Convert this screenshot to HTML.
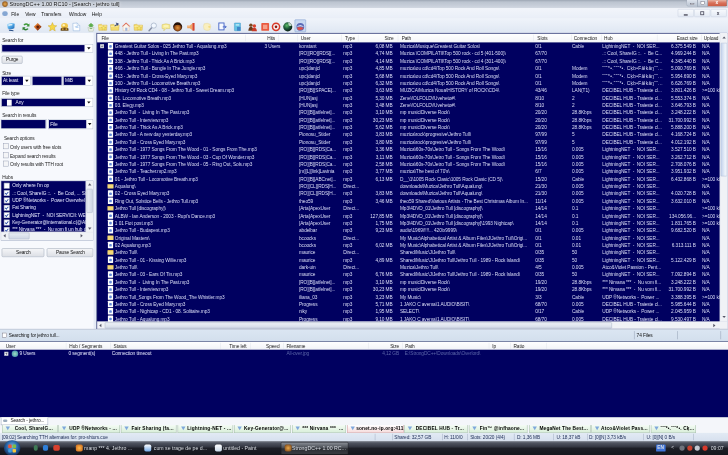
<!DOCTYPE html>
<html><head><meta charset="utf-8"><title>StrongDC++</title>
<style>
html,body{margin:0;padding:0;width:728px;height:455px;overflow:hidden;background:#fff}
#s{position:absolute;left:0;top:0;width:1680px;height:1050px;transform:scale(0.4333333);transform-origin:0 0;font-family:"Liberation Sans",sans-serif;font-size:11px;letter-spacing:-0.18px;color:#000;background:#f6f8fc;overflow:hidden;filter:blur(0.8px)}
#s div,#s span,#s i,#s b{position:absolute;box-sizing:border-box;white-space:nowrap;font-style:normal;font-weight:normal}
.nv{background:#000060}
#title{left:0;top:0;width:1680px;height:19px;background:linear-gradient(#9ea7b4 0,#bcc4d0 25%,#c8cfda 70%,#d3d9e3 100%)}
#menu{left:0;top:19px;width:1680px;height:24px;background:linear-gradient(#f2f5fb,#e9eef7)}
#menu span{top:7px;font-size:11.2px;letter-spacing:0;color:#111}
#tool{left:0;top:43px;width:1680px;height:33px;background:linear-gradient(#eff3fa,#dfe7f3)}
#left{left:0;top:76px;width:216px;height:683px;background:#f7f9fd;color:#1a1a1a}
#split{left:216px;top:76px;width:6px;height:683px;background:#e6ecf6}
#list{left:222px;top:76px;width:1456px;height:683px;background:#000060;overflow:hidden;border-left:2px solid #8f9bb5;}
#lhead{left:0;top:0;width:1456px;height:22px;background:linear-gradient(#ffffff,#f4f5f8);border-top:2px solid #7a84a6;border-bottom:1px solid #d5dbe6;color:#222}
#lhead span{top:4px}
#lhead i{top:2px;width:1px;height:15px;background:#dfe3ea}
.r{left:0;width:1436px;height:17px;color:#dcdff8}
#s .r span{top:3px;white-space:pre}
.rt{text-align:right}
.pm{left:7px;top:4px;width:9px;height:9px;background:#fff;border:1px solid #8a93a8}
.pm:before{content:"";position:absolute;left:1px;top:3px;width:5px;height:1px;background:#224}
.pm:after{content:"";position:absolute;left:3px;top:1px;width:1px;height:5px;background:#224}
.fi{left:25px;top:1px;width:12px;height:15px;background:#fff;border-radius:1px}
.fi:after{content:"";position:absolute;left:3px;top:5px;width:6px;height:6px;background:#5f86d6;border-radius:2px}
.di{left:24px;top:3px;width:14px;height:11px;background:#f3d978;border-radius:1px;border-top:2px solid #e0b84a}
.cb{background:#fff;border:1px solid #8e98ae;width:17px}
.cb:after{content:"";position:absolute;left:4px;top:50%;margin-top:-2px;border:4px solid transparent;border-top:4px solid #111;border-bottom:0}
.lb{color:#1a1a1a}
.btn{background:linear-gradient(#f5f6f8,#dcdfe5);border:1px solid #8b95a8;border-radius:3px;text-align:center;color:#111}
.chk{width:13px;height:13px;background:#f4f5f7;border:1px solid #8e98ae}
.hr{left:0;width:193px;height:17px;color:#e6e9ff}
.hr b{left:6px;top:2px;width:13px;height:13px;background:#fff;border:1px solid #7b89a8}
.hr b.c:after{content:"";position:absolute;left:3px;top:1px;width:3px;height:6px;border:solid #2a4ea8;border-width:0 2px 2px 0;transform:rotate(40deg)}
#s .hr span{left:25px;top:2px;white-space:pre}
.sb{background:#f0f2f6}
</style></head><body><div id="s">
<div id="title">
<div style="left:5px;top:3px;width:13px;height:13px;border-radius:7px;background:radial-gradient(#e9a84a,#6b3a12)"></div>
<span style="left:22px;top:3px;font-size:12.6px;letter-spacing:0;color:#111;text-shadow:0 0 6px #fff,0 0 10px #fff">StrongDC++ 1.00 RC10 - [Search - jethro tull]</span>
<div style="left:1584px;top:0;width:26px;height:15px;background:linear-gradient(#dfe5ee,#b9c3d1);border:1px solid #8793a6;border-top:0;border-radius:0 0 0 4px"><div style="left:8px;top:8px;width:9px;height:3px;background:#fff;border:1px solid #556"></div></div>
<div style="left:1609px;top:0;width:25px;height:15px;background:linear-gradient(#dfe5ee,#b9c3d1);border:1px solid #8793a6;border-top:0"><div style="left:7px;top:3px;width:9px;height:8px;background:#fff;border:1px solid #556"></div></div>
<div style="left:1633px;top:0;width:45px;height:15px;background:linear-gradient(#e8b4a4,#d8705a 50%,#cc5e46);border:1px solid #8a4a40;border-top:0;border-radius:0 0 4px 0"><span style="left:17px;top:0px;color:#fff;font-weight:bold;font-size:11px">x</span></div>
</div>
<div id="menu">
<div style="left:5px;top:7px;width:13px;height:11px;border-radius:6px;background:#6a93c9;opacity:.8"></div>
<span style="left:26px">File</span>
<span style="left:58px">View</span>
<span style="left:95px">Transfers</span>
<span style="left:159px">Window</span>
<span style="left:212px">Help</span>
<div style="left:1564px;top:2px;width:37px;height:18px;background:linear-gradient(#f8fafd,#e4eaf4);border:1px solid #c5cfdf;border-radius:2px"></div>
<div style="left:1602px;top:2px;width:37px;height:18px;background:linear-gradient(#f8fafd,#e4eaf4);border:1px solid #c5cfdf;border-radius:2px"></div>
<div style="left:1640px;top:2px;width:37px;height:18px;background:linear-gradient(#f8fafd,#e4eaf4);border:1px solid #c5cfdf;border-radius:2px"></div>
<div style="left:1578px;top:14px;width:9px;height:3px;background:#445"></div>
<div style="left:1616px;top:7px;width:9px;height:9px;border:2px solid #556"></div>
<span style="left:1654px;top:5px;font-weight:bold;color:#445">x</span>
</div>
<div id="tool">
<div style="left:680px;top:2px;width:26px;height:29px;background:#c9d9f1;border:1px solid #6d8fc6;border-radius:2px"></div>
<svg style="position:absolute;left:13px;top:7px" width="24" height="24" viewBox="0 0 24 24"><defs><linearGradient id="g1" x1="0" y1="0" x2="1" y2="1"><stop offset="0" stop-color="#d8f2ff"/><stop offset=".5" stop-color="#4fa8e6"/><stop offset="1" stop-color="#1d5fae"/></linearGradient></defs><path d="M3 6 Q12 1 21 5 L20 15 Q12 19 5 16 Z" fill="url(#g1)"/><path d="M6 7 Q11 5 16 6 L15 9 Q10 8 7 10Z" fill="#fff" opacity=".8"/><path d="M7 18 L18 20 L18 22 L8 21Z" fill="#2b4f86"/></svg>
<svg style="position:absolute;left:48px;top:7px" width="24" height="24" viewBox="0 0 24 24"><path d="M6 7 Q12 1 18 6 L20 4 L20 11 L13 11 L15.5 8.5 Q12 6 9 9Z" fill="#3f9a3a"/><path d="M18 17 Q12 23 6 18 L4 20 L4 13 L11 13 L8.5 15.5 Q12 18 15 15Z" fill="#2f7f32"/></svg>
<svg style="position:absolute;left:75px;top:7px" width="24" height="24" viewBox="0 0 24 24"><defs><linearGradient id="g3" x1="0" y1="0" x2="1" y2="1"><stop offset="0" stop-color="#f6a64a"/><stop offset=".5" stop-color="#c4561c"/><stop offset="1" stop-color="#4a1606"/></linearGradient></defs><path d="M12 3 L21 12 L12 21 L3 12Z" fill="url(#g3)"/><circle cx="12" cy="12" r="3" fill="#5a1e08"/></svg>
<svg style="position:absolute;left:109px;top:7px" width="24" height="24" viewBox="0 0 24 24"><path d="M12 2 L15 9 L22 9.5 L16.5 14 L18.5 21.5 L12 17.5 L5.500 21.5 L7.500 14 L2 9.500 L9 9Z" fill="#f6d845" stroke="#c9a227" stroke-width="1"/></svg>
<svg style="position:absolute;left:137px;top:7px" width="24" height="24" viewBox="0 0 24 24"><ellipse cx="12" cy="10" rx="8" ry="7" fill="#f1c74c"/><ellipse cx="10" cy="8" rx="3" ry="2.500" fill="#fff3b8"/><path d="M3 16 Q12 11 21 16 L21 21 L3 21Z" fill="#6a4a1a"/><circle cx="8" cy="17" r="2" fill="#d8a83a"/><circle cx="16" cy="17" r="2" fill="#d8a83a"/></svg>
<svg style="position:absolute;left:164px;top:7px" width="24" height="24" viewBox="0 0 24 24"><path d="M4 4 L14 3 L20 9 L20 21 L5 21Z" fill="#fdfeff" stroke="#8fb1dd" stroke-width="1.200"/><path d="M8 12 Q13 7 18 13 Q14 17 8 12Z" fill="#b7d2f2"/><path d="M14 3 L14 9 L20 9" fill="none" stroke="#8fb1dd"/></svg>
<svg style="position:absolute;left:198px;top:7px" width="24" height="24" viewBox="0 0 24 24"><path d="M5 9 L12 3 L19 9 L16 9 L16 13 L8 13 L8 9Z" fill="#5fae4e"/><path d="M5 13 L19 13 L17 22 L7 22Z" fill="#eef1ea" stroke="#a9b7a2" stroke-width="1"/><path d="M9 16 L15 16" stroke="#6aa85a" stroke-width="2"/></svg>
<svg style="position:absolute;left:225px;top:7px" width="24" height="24" viewBox="0 0 24 24"><path d="M2 7 L9 6 L11 8 L22 8 L21 20 L3 20Z" fill="#f4dc6c" stroke="#d2ac3a" stroke-width="1"/><path d="M3 11 L21 10" stroke="#fff4b8" stroke-width="1.500"/><path d="M14 9 L15.500 13 L19.500 13 L16.500 15.500 L17.500 19.500 L14 17 L10.500 19.500 L11.500 15.500 L8.500 13 L12.500 13Z" fill="#f7ef7a" stroke="#c9a227" stroke-width=".7"/></svg>
<svg style="position:absolute;left:253px;top:7px" width="24" height="24" viewBox="0 0 24 24"><path d="M2 7 L9 6 L11 8 L22 8 L21 20 L3 20Z" fill="#f4dc6c" stroke="#d2ac3a" stroke-width="1"/><path d="M3 11 L21 10" stroke="#fff4b8" stroke-width="1.500"/><path d="M14 2 L21 4 L19 10 L17.500 7.500 L12 11 L11 9.500 L16 6Z" fill="#3a4a7a"/></svg>
<svg style="position:absolute;left:279px;top:7px" width="24" height="24" viewBox="0 0 24 24"><path d="M2 11 L12 2 L22 11 L18 11 L12 5.500 L6 11Z" fill="#e2604a"/><path d="M5 11 L12 5 L19 11 L19 21 L5 21Z" fill="#fbf4ec" stroke="#d9b9a2" stroke-width="1"/><rect x="10" y="14" width="5" height="7" fill="#9fb7dd"/></svg>
<svg style="position:absolute;left:307px;top:7px" width="24" height="24" viewBox="0 0 24 24"><path d="M2 7 L9 6 L11 8 L22 8 L21 20 L3 20Z" fill="#f4dc6c" stroke="#d2ac3a" stroke-width="1"/><path d="M3 11 L21 10" stroke="#fff4b8" stroke-width="1.500"/><path d="M14 9 L15.500 13 L19.500 13 L16.500 15.500 L17.500 19.500 L14 17 L10.500 19.500 L11.500 15.500 L8.500 13 L12.500 13Z" fill="#f7ef7a" stroke="#c9a227" stroke-width=".7"/></svg>
<svg style="position:absolute;left:340px;top:7px" width="24" height="24" viewBox="0 0 24 24"><path d="M4 21 L11 13" stroke="#8a93a8" stroke-width="3.500" stroke-linecap="round"/><circle cx="15" cy="9" r="6" fill="#f2f8ff" stroke="#a7b4c9" stroke-width="1.800"/></svg>
<svg style="position:absolute;left:371px;top:7px" width="24" height="24" viewBox="0 0 24 24"><path d="M3 7 Q12 3 21 7 L21 16 L12 16 L7 21 L8 16 L3 16Z" fill="#f8ed9a" stroke="#cdb94e" stroke-width="1"/><path d="M7 10 L17 10" stroke="#fffbe0" stroke-width="2"/></svg>
<svg style="position:absolute;left:398px;top:7px" width="24" height="24" viewBox="0 0 24 24"><defs><radialGradient id="g14" cx=".5" cy=".6" r=".5"><stop offset="0" stop-color="#e0963c"/><stop offset=".55" stop-color="#a85a1c"/><stop offset="1" stop-color="#24100a"/></radialGradient></defs><circle cx="12" cy="12" r="10.500" fill="url(#g14)"/><path d="M3 9 Q12 -2 21 9 Q12 5 3 9Z" fill="#1a0c06"/></svg>
<svg style="position:absolute;left:429px;top:7px" width="24" height="24" viewBox="0 0 24 24"><path d="M3 9 L9 9 L15 4 L15 20 L9 15 L3 15Z" fill="#f0a868"/><rect x="15" y="3" width="5" height="18" rx="1" fill="#d8482e"/><path d="M4 10 L9 10" stroke="#ffe0c0" stroke-width="1.500"/></svg>
<svg style="position:absolute;left:466px;top:7px" width="24" height="24" viewBox="0 0 24 24"><path d="M5 5 Q12 2 19 6 Q22 12 18 19 Q11 22 5 18 Q2 11 5 5Z" fill="#f9efbf" stroke="#e6d592" stroke-width="1"/><circle cx="17" cy="12" r="2.500" fill="#f3dc84"/></svg>
<svg style="position:absolute;left:501px;top:7px" width="24" height="24" viewBox="0 0 24 24"><rect x="4" y="3" width="12" height="16" fill="#f6f9ff" stroke="#3d5ec4" stroke-width="2"/><path d="M13 12 L21 12 M18 9 L21 12 L18 15" stroke="#3d5ec4" stroke-width="2" fill="none"/></svg>
<svg style="position:absolute;left:536px;top:7px" width="24" height="24" viewBox="0 0 24 24"><rect x="5" y="3" width="14" height="18" rx="1" fill="#63c3e4" stroke="#3a8fc4" stroke-width="1"/><rect x="8" y="6" width="8" height="3" fill="#c8eefa"/><rect x="11" y="12" width="8" height="9" fill="#3f86c8"/></svg>
<svg style="position:absolute;left:571px;top:7px" width="24" height="24" viewBox="0 0 24 24"><circle cx="8" cy="8" r="4" fill="#7a4a22"/><path d="M2 21 Q3 12 8 12 Q13 12 14 21Z" fill="#6a3a1a"/><circle cx="16" cy="10" r="4" fill="#d9442e"/><path d="M10 22 Q11 14 16 14 Q21 14 22 22Z" fill="#c83a28"/></svg>
<svg style="position:absolute;left:600px;top:7px" width="24" height="24" viewBox="0 0 24 24"><rect x="3" y="3" width="18" height="18" rx="2" fill="#e9583f"/><rect x="7" y="7" width="10" height="10" fill="#f4a08a"/></svg>
<svg style="position:absolute;left:625px;top:7px" width="24" height="24" viewBox="0 0 24 24"><circle cx="12" cy="12" r="10" fill="#d83a2a"/><circle cx="12" cy="12" r="6.500" fill="#f6eeee"/><circle cx="12" cy="12" r="3" fill="#8a1a12"/></svg>
<svg style="position:absolute;left:652px;top:7px" width="24" height="24" viewBox="0 0 24 24"><defs><radialGradient id="g22" cx=".4" cy=".35" r=".7"><stop offset="0" stop-color="#5fc06a"/><stop offset=".5" stop-color="#1f5a3a"/><stop offset="1" stop-color="#081410"/></radialGradient></defs><circle cx="12" cy="12" r="10.500" fill="url(#g22)"/><path d="M13 2 Q20 3 21 10 Q17 11 14 8Z" fill="#e8f6e8" opacity=".8"/></svg>
<svg style="position:absolute;left:681px;top:7px" width="24" height="24" viewBox="0 0 24 24"><circle cx="12" cy="12" r="9" fill="#5a6ab8"/><path d="M3 12 Q12 5 21 12 Q12 9 3 12Z" fill="#fff"/><path d="M4 14 Q12 10 20 15 Q13 22 7 19Z" fill="#d8504a"/></svg>
</div>
<div id="left">
<span class="lb" style="left:5px;top:10px">Search for</span>
<div style="left:3px;top:26px;width:212px;height:19px;background:#fff;border:1px solid #a9b5c9"></div>
<div class="nv" style="left:5px;top:28px;width:190px;height:15px;color:#f0f2ff"><span style="left:3px;top:1px"></span></div>
<div style="left:201px;top:33px;border:4px solid transparent;border-top:5px solid #111;border-bottom:0"></div>
<div class="btn" style="left:4px;top:53px;width:48px;height:18px"><span style="left:9px;top:1px">Purge</span></div>
<span class="lb" style="left:5px;top:86px">Size</span>
<div style="left:2px;top:99px;width:69px;height:23px;background:#fff;border:1px solid #a9b5c9"></div>
<div class="nv" style="left:4px;top:101px;width:49px;height:19px;color:#f0f2ff"><span style="left:3px;top:3px">At least</span></div>
<div style="left:58px;top:108px;border:4px solid transparent;border-top:5px solid #111;border-bottom:0"></div>
<div style="left:73px;top:99px;width:71px;height:23px;background:#fff;border:1px solid #a9b5c9"></div><div class="nv" style="left:75px;top:101px;width:67px;height:19px"></div>
<div style="left:145px;top:99px;width:70px;height:23px;background:#fff;border:1px solid #a9b5c9"></div>
<div class="nv" style="left:147px;top:101px;width:50px;height:19px;color:#f0f2ff"><span style="left:3px;top:3px">MiB</span></div>
<div style="left:202px;top:108px;border:4px solid transparent;border-top:5px solid #111;border-bottom:0"></div>
<span class="lb" style="left:5px;top:134px">File type</span>
<div style="left:2px;top:150px;width:213px;height:21px;background:#fff;border:1px solid #a9b5c9"></div>
<div class="nv" style="left:4px;top:152px;width:192px;height:17px;color:#f0f2ff"><span style="left:0px;top:2px"><i style="left:12px;top:0px;width:11px;height:14px;background:#fff"></i><span style="left:32px;top:0">Any</span></span></div>
<div style="left:201px;top:158px;border:4px solid transparent;border-top:5px solid #111;border-bottom:0"></div>
<span class="lb" style="left:5px;top:184px">Search in results</span>
<div style="left:2px;top:199px;width:105px;height:22px;background:#fff;border:1px solid #a9b5c9"></div><div class="nv" style="left:3px;top:201px;width:102px;height:19px"></div>
<div style="left:111px;top:199px;width:104px;height:23px;background:#fff;border:1px solid #a9b5c9"></div>
<div class="nv" style="left:113px;top:201px;width:86px;height:19px;color:#f0f2ff"><span style="left:3px;top:3px">File</span></div>
<div style="left:203px;top:208px;border:4px solid transparent;border-top:5px solid #111;border-bottom:0"></div>
<span class="lb" style="left:9px;top:236px">Search options</span>
<div class="chk" style="left:7px;top:255px"></div>
<span class="lb" style="left:23px;top:257px">Only users with free slots</span>
<div class="chk" style="left:7px;top:276px"></div>
<span class="lb" style="left:23px;top:278px">Expand search results</span>
<div class="chk" style="left:7px;top:295px"></div>
<span class="lb" style="left:23px;top:297px">Only results with TTH root</span>
<span class="lb" style="left:5px;top:327px">Hubs</span>
<div style="left:2px;top:341px;width:214px;height:138px;background:#fff;border:1px solid #7f8db0"></div>
<div class="nv" style="left:3px;top:342px;width:195px;height:117px;overflow:hidden">
<div class="hr" style="top:2px"><b></b><span>Only where I&#x27;m op</span></div>
<div class="hr" style="top:19px"><b class="c"></b><span>.:: Cool, ShareIG ::.  -  Be Cool, ... St</span></div>
<div class="hr" style="top:36px"><b class="c"></b><span>UDP ®Networks -  Power Overwhel</span></div>
<div class="hr" style="top:53px"><b class="c"></b><span>Fat Sharing</span></div>
<div class="hr" style="top:70px"><b class="c"></b><span>LightningNET  -  NOI SERVICII: WE</span></div>
<div class="hr" style="top:87px"><b class="c"></b><span>Key-Generator@international.c{@ABC</span></div>
<div class="hr" style="top:104px"><b class="c"></b><span>*** Nirvana ***  -  Nu vom fi un hub d</span></div>
</div>
<div class="sb" style="left:198px;top:342px;width:17px;height:117px;border-left:1px solid #d8dde8"></div>
<div style="left:200px;top:360px;width:14px;height:55px;background:linear-gradient(90deg,#e9edf4,#cfd6e4);border:1px solid #9aa6bd;border-radius:2px"></div>
<div style="left:203px;top:347px;border:4px solid transparent;border-bottom:5px solid #556;border-top:0"></div>
<div style="left:203px;top:449px;border:4px solid transparent;border-top:5px solid #556;border-bottom:0"></div>
<div class="sb" style="left:3px;top:459px;width:212px;height:19px;border-top:1px solid #d8dde8"></div>
<div style="left:20px;top:461px;width:48px;height:15px;background:linear-gradient(#e9edf4,#cfd6e4);border:1px solid #9aa6bd;border-radius:2px"></div>
<div style="left:8px;top:464px;border:4px solid transparent;border-right:5px solid #556;border-left:0"></div>
<div style="left:186px;top:464px;border:4px solid transparent;border-left:5px solid #556;border-right:0"></div>
<div class="btn" style="left:4px;top:497px;width:98px;height:20px"><span style="left:32px;top:2px">Search</span></div>
<div class="btn" style="left:108px;top:497px;width:107px;height:20px"><span style="left:20px;top:2px">Pause Search</span></div>
</div><div id="split"></div>
<div id="list"><div id="lhead">
<span style="left:10px">File</span>
<span class="rt" style="left:351px;width:60px">Hits</span>
<span style="left:470px">User</span>
<span style="left:572px">Type</span>
<span class="rt" style="left:624px;width:60px">Size</span>
<span style="left:703px">Path</span>
<span style="left:1016px">Slots</span>
<span style="left:1100px">Connection</span>
<span style="left:1170px">Hub</span>
<span class="rt" style="left:1326px;width:60px">Exact size</span>
<span style="left:1400px">Upload</span>
<i style="left:342px"></i>
<i style="left:418px"></i>
<i style="left:462px"></i>
<i style="left:564px"></i>
<i style="left:602px"></i>
<i style="left:694px"></i>
<i style="left:1006px"></i>
<i style="left:1094px"></i>
<i style="left:1164px"></i>
<i style="left:1292px"></i>
<i style="left:1394px"></i>
</div>
<div class="r" style="top:22px">
<div class="pm"></div>
<div class="fi"></div>
<span style="left:41px">Greatest Guitar Solos - 025 Jethro Tull - Aqualung.mp3</span>
<span class="rt" style="left:345px;width:78px">3 Users</span>
<span style="left:466px">konstant</span>
<span style="left:568px">mp3</span>
<span class="rt" style="left:598px;width:84px">6,08 MB</span>
<span style="left:699px">Muzica\Musique\Greatest Guitar Solos\</span>
<span style="left:1011px">0/1</span>
<span style="left:1096px">Cable</span>
<span style="left:1166px">LightningNET  -  NOI SER...</span>
<span class="rt" style="left:1286px;width:96px">6.375.549 B</span>
<span style="left:1396px">N/A</span>
</div>
<div class="r" style="top:39px">
<div class="fi"></div>
<span style="left:41px">448 - Jethro Tull - Living In The Past.mp3</span>
<span style="left:466px">[RO][RO][RDS][...</span>
<span style="left:568px">mp3</span>
<span class="rt" style="left:598px;width:84px">4,74 MB</span>
<span style="left:699px">Muzica \COMPILATII\Top 500 rock - cd 5 (401-500)\</span>
<span style="left:1011px">67/70</span>
<span style="left:1166px">.:: Cool, ShareIG ::.  -  Be C...</span>
<span class="rt" style="left:1286px;width:96px">4.969.244 B</span>
<span style="left:1396px">N/A</span>
</div>
<div class="r" style="top:56px">
<div class="fi"></div>
<span style="left:41px">338 - Jethro Tull - Thick As A Brick.mp3</span>
<span style="left:466px">[RO][RO][RDS][...</span>
<span style="left:568px">mp3</span>
<span class="rt" style="left:598px;width:84px">4,14 MB</span>
<span style="left:699px">Muzica \COMPILATII\Top 500 rock - cd 4 (301-400)\</span>
<span style="left:1011px">67/70</span>
<span style="left:1166px">.:: Cool, ShareIG ::.  -  Be C...</span>
<span class="rt" style="left:1286px;width:96px">4.345.440 B</span>
<span style="left:1396px">N/A</span>
</div>
<div class="r" style="top:73px">
<div class="fi"></div>
<span style="left:41px">466 - Jethro Tull - Bungle In The Jungle.mp3</span>
<span style="left:466px">upc}danjcl</span>
<span style="left:568px">mp3</span>
<span class="rt" style="left:598px;width:84px">4,85 MB</span>
<span style="left:699px">muzica\ou cd\cd4\Top 500 Rock And Roll Songs\</span>
<span style="left:1011px">0/1</span>
<span style="left:1096px">Modem</span>
<span style="left:1166px;letter-spacing:0.7px">˜˜˜*•.˜˜˜*•. Cķb•Fâłkâŋ˜˜...</span>
<span class="rt" style="left:1286px;width:96px">5.090.769 B</span>
<span style="left:1396px">N/A</span>
</div>
<div class="r" style="top:90px">
<div class="fi"></div>
<span style="left:41px">413 - Jethro Tull - Cross-Eyed Mary.mp3</span>
<span style="left:466px">upc}danjcl</span>
<span style="left:568px">mp3</span>
<span class="rt" style="left:598px;width:84px">5,68 MB</span>
<span style="left:699px">muzica\ou cd\cd4\Top 500 Rock And Roll Songs\</span>
<span style="left:1011px">0/1</span>
<span style="left:1096px">Modem</span>
<span style="left:1166px;letter-spacing:0.7px">˜˜˜*•.˜˜˜*•. Cķb•Fâłkâŋ˜˜...</span>
<span class="rt" style="left:1286px;width:96px">5.954.690 B</span>
<span style="left:1396px">N/A</span>
</div>
<div class="r" style="top:107px">
<div class="fi"></div>
<span style="left:41px">100 - Jethro Tull - Locomotive Breath.mp3</span>
<span style="left:466px">upc}danjcl</span>
<span style="left:568px">mp3</span>
<span class="rt" style="left:598px;width:84px">6,32 MB</span>
<span style="left:699px">muzica\ou cd\cd4\Top 500 Rock And Roll Songs\</span>
<span style="left:1011px">0/1</span>
<span style="left:1096px">Modem</span>
<span style="left:1166px;letter-spacing:0.7px">˜˜˜*•.˜˜˜*•. Cķb•Fâłkâŋ˜˜...</span>
<span class="rt" style="left:1286px;width:96px">6.626.769 B</span>
<span style="left:1396px">N/A</span>
</div>
<div class="r" style="top:124px">
<div class="fi"></div>
<span style="left:41px">History Of Rock CD4 - 08 - Jethro Tull - Sweet Dream.mp3</span>
<span style="left:466px">[RO][B][SPACE]...</span>
<span style="left:568px">mp3</span>
<span class="rt" style="left:598px;width:84px">3,63 MB</span>
<span style="left:699px">MUZICA\Muzica Noua\HISTORY of ROCK\CD4\</span>
<span style="left:1011px">43/46</span>
<span style="left:1096px">LAN(T1)</span>
<span style="left:1166px">DECIBEL HUB - Traieste cl...</span>
<span class="rt" style="left:1286px;width:96px">3.801.426 B</span>
<span style="left:1396px">&gt;=100 kI</span>
</div>
<div class="r" style="top:141px">
<div class="fi"></div>
<span style="left:41px">01. Locomotive Breath.mp3</span>
<span style="left:466px">[HUN]asj</span>
<span style="left:568px">mp3</span>
<span class="rt" style="left:598px;width:84px">5,30 MB</span>
<span style="left:699px">Zene\!OLFOLD\!Uveheto#\</span>
<span style="left:1011px">8/10</span>
<span style="left:1096px">2</span>
<span style="left:1166px">DECIBEL HUB - Traieste cl...</span>
<span class="rt" style="left:1286px;width:96px">5.553.374 B</span>
<span style="left:1396px">N/A</span>
</div>
<div class="r" style="top:158px">
<div class="fi"></div>
<span style="left:41px">03. Elegy.mp3</span>
<span style="left:466px">[HUN]asj</span>
<span style="left:568px">mp3</span>
<span class="rt" style="left:598px;width:84px">3,48 MB</span>
<span style="left:699px">Zene\!OLFOLD\!Uveheto#\</span>
<span style="left:1011px">8/10</span>
<span style="left:1096px">2</span>
<span style="left:1166px">DECIBEL HUB - Traieste cl...</span>
<span class="rt" style="left:1286px;width:96px">3.646.793 B</span>
<span style="left:1396px">N/A</span>
</div>
<div class="r" style="top:175px">
<div class="fi"></div>
<span style="left:41px">Jethro Tull  -  Living In The Past.mp3</span>
<span style="left:466px">[RO][B][atfelnet]...</span>
<span style="left:568px">mp3</span>
<span class="rt" style="left:598px;width:84px">3,10 MB</span>
<span style="left:699px">mp music\Diverse Rock\</span>
<span style="left:1011px">20/20</span>
<span style="left:1096px">28.8Kbps</span>
<span style="left:1166px">DECIBEL HUB - Traieste cl...</span>
<span class="rt" style="left:1286px;width:96px">3.248.222 B</span>
<span style="left:1396px">N/A</span>
</div>
<div class="r" style="top:192px">
<div class="fi"></div>
<span style="left:41px">Jethro Tull - Interview.mp3</span>
<span style="left:466px">[RO][B][atfelnet]...</span>
<span style="left:568px">mp3</span>
<span class="rt" style="left:598px;width:84px">30,23 MB</span>
<span style="left:699px">mp music\Diverse Rock\</span>
<span style="left:1011px">20/20</span>
<span style="left:1096px">28.8Kbps</span>
<span style="left:1166px">DECIBEL HUB - Traieste cl...</span>
<span class="rt" style="left:1286px;width:96px">31.700.992 B</span>
<span style="left:1396px">N/A</span>
</div>
<div class="r" style="top:209px">
<div class="fi"></div>
<span style="left:41px">Jethro Tull - Thick As A Brick.mp3</span>
<span style="left:466px">[RO][B][atfelnet]...</span>
<span style="left:568px">mp3</span>
<span class="rt" style="left:598px;width:84px">5,62 MB</span>
<span style="left:699px">mp music\Diverse Rock\</span>
<span style="left:1011px">20/20</span>
<span style="left:1096px">28.8Kbps</span>
<span style="left:1166px">DECIBEL HUB - Traieste cl...</span>
<span class="rt" style="left:1286px;width:96px">5.888.200 B</span>
<span style="left:1396px">N/A</span>
</div>
<div class="r" style="top:226px">
<div class="fi"></div>
<span style="left:41px">Jethro Tull - A new day yesterday.mp3</span>
<span style="left:466px">Pionosu_Stider</span>
<span style="left:568px">mp3</span>
<span class="rt" style="left:598px;width:84px">3,83 MB</span>
<span style="left:699px">muzica\rock\progresive\Jethro Tull\</span>
<span style="left:1011px">97/99</span>
<span style="left:1096px">5</span>
<span style="left:1166px">DECIBEL HUB - Traieste cl...</span>
<span class="rt" style="left:1286px;width:96px">4.168.724 B</span>
<span style="left:1396px">N/A</span>
</div>
<div class="r" style="top:243px">
<div class="fi"></div>
<span style="left:41px">Jethro Tull - Cross Eyed Mary.mp3</span>
<span style="left:466px">Pionosu_Stider</span>
<span style="left:568px">mp3</span>
<span class="rt" style="left:598px;width:84px">3,80 MB</span>
<span style="left:699px">muzica\rock\progresive\Jethro Tull\</span>
<span style="left:1011px">97/99</span>
<span style="left:1096px">5</span>
<span style="left:1166px">DECIBEL HUB - Traieste cl...</span>
<span class="rt" style="left:1286px;width:96px">4.012.192 B</span>
<span style="left:1396px">N/A</span>
</div>
<div class="r" style="top:260px">
<div class="fi"></div>
<span style="left:41px">Jethro Tull - 1977 Songs From The Wood - 01 - Songs From The.mp3</span>
<span style="left:466px">[RO][B][RDS]Ca...</span>
<span style="left:568px">mp3</span>
<span class="rt" style="left:598px;width:84px">3,36 MB</span>
<span style="left:699px">Muzica\60s-70s\Jetro Tull - Songs From The Wood\</span>
<span style="left:1011px">15/16</span>
<span style="left:1096px">0.005</span>
<span style="left:1166px">LightningNET  -  NOI SER...</span>
<span class="rt" style="left:1286px;width:96px">3.527.510 B</span>
<span style="left:1396px">N/A</span>
</div>
<div class="r" style="top:277px">
<div class="fi"></div>
<span style="left:41px">Jethro Tull - 1977 Songs From The Wood - 03 - Cup Of Wonder.mp3</span>
<span style="left:466px">[RO][B][RDS]Ca...</span>
<span style="left:568px">mp3</span>
<span class="rt" style="left:598px;width:84px">3,11 MB</span>
<span style="left:699px">Muzica\60s-70s\Jetro Tull - Songs From The Wood\</span>
<span style="left:1011px">15/16</span>
<span style="left:1096px">0.005</span>
<span style="left:1166px">LightningNET  -  NOI SER...</span>
<span class="rt" style="left:1286px;width:96px">3.262.712 B</span>
<span style="left:1396px">N/A</span>
</div>
<div class="r" style="top:294px">
<div class="fi"></div>
<span style="left:41px">Jethro Tull - 1977 Songs From The Wood - 05 - Ring Out, Sols.mp3</span>
<span style="left:466px">[RO][B][RDS]Ca...</span>
<span style="left:568px">mp3</span>
<span class="rt" style="left:598px;width:84px">2,58 MB</span>
<span style="left:699px">Muzica\60s-70s\Jetro Tull - Songs From The Wood\</span>
<span style="left:1011px">15/16</span>
<span style="left:1096px">0.005</span>
<span style="left:1166px">LightningNET  -  NOI SER...</span>
<span class="rt" style="left:1286px;width:96px">2.708.076 B</span>
<span style="left:1396px">N/A</span>
</div>
<div class="r" style="top:311px">
<div class="fi"></div>
<span style="left:41px">Jethro Tull - Teacher.mp2.mp3</span>
<span style="left:466px">[m][L][link]Lavinia</span>
<span style="left:568px">mp3</span>
<span class="rt" style="left:598px;width:84px">3,77 MB</span>
<span style="left:699px">muzica\The best of 70&#x27;s\</span>
<span style="left:1011px">6/7</span>
<span style="left:1096px">0.005</span>
<span style="left:1166px">LightningNET  -  NOI SER...</span>
<span class="rt" style="left:1286px;width:96px">3.951.932 B</span>
<span style="left:1396px">N/A</span>
</div>
<div class="r" style="top:328px">
<div class="fi"></div>
<span style="left:41px">01 - Jethro Tull - Locomotive Breath.mp3</span>
<span style="left:466px">[RO][B][ABCnet]...</span>
<span style="left:568px">mp3</span>
<span class="rt" style="left:598px;width:84px">6,13 MB</span>
<span style="left:699px">D__\1\1005 Rock Clasic\1005 Rock Clasic (CD 5)\</span>
<span style="left:1011px">15/20</span>
<span style="left:1096px">Cable</span>
<span style="left:1166px">LightningNET  -  NOI SER...</span>
<span class="rt" style="left:1286px;width:96px">6.432.868 B</span>
<span style="left:1396px">&gt;=100 kI</span>
</div>
<div class="r" style="top:345px">
<div class="di"></div>
<span style="left:41px">Aqualung\</span>
<span style="left:466px">[RO][CL][RDS]H...</span>
<span style="left:568px">Direct...</span>
<span style="left:699px">downloads\Muzica\Jethro Tull\Aqualung\</span>
<span style="left:1011px">21/30</span>
<span style="left:1096px">0.005</span>
<span style="left:1166px">LightningNET  -  NOI SER...</span>
<span style="left:1396px">N/A</span>
</div>
<div class="r" style="top:362px">
<div class="fi"></div>
<span style="left:41px">02 - Cross Eyed Mary.mp3</span>
<span style="left:466px">[RO][CL][RDS]H...</span>
<span style="left:568px">mp3</span>
<span class="rt" style="left:598px;width:84px">3,83 MB</span>
<span style="left:699px">downloads\Muzica\Jethro Tull\Aqualung\</span>
<span style="left:1011px">21/30</span>
<span style="left:1096px">0.005</span>
<span style="left:1166px">LightningNET  -  NOI SER...</span>
<span class="rt" style="left:1286px;width:96px">4.020.728 B</span>
<span style="left:1396px">N/A</span>
</div>
<div class="r" style="top:379px">
<div class="fi"></div>
<span style="left:41px">Ring Out, Solstice Bells - Jethro Tull.mp3</span>
<span style="left:466px">theo59</span>
<span style="left:568px">mp3</span>
<span class="rt" style="left:598px;width:84px">3,46 MB</span>
<span style="left:699px">theo59 Shared\Various Artists - The Best Christmas Album In...</span>
<span style="left:1011px">11/14</span>
<span style="left:1096px">0.005</span>
<span style="left:1166px">LightningNET  -  NOI SER...</span>
<span class="rt" style="left:1286px;width:96px">3.632.010 B</span>
<span style="left:1396px">N/A</span>
</div>
<div class="r" style="top:396px">
<div class="di"></div>
<span style="left:41px">Jethro Tull [discography]\</span>
<span style="left:466px">[Arta]ApexUser</span>
<span style="left:568px">Direct...</span>
<span style="left:699px">Mp3\4DVD_01\Jethro Tull [discography]\</span>
<span style="left:1011px">14/14</span>
<span style="left:1096px">0.1</span>
<span style="left:1166px">LightningNET  -  NOI SER...</span>
<span style="left:1396px">&gt;=100 kI</span>
</div>
<div class="r" style="top:413px">
<div class="fi"></div>
<span style="left:41px">ALBW - Ian Anderson - 2003 - Rupi&#x27;s Dance.mp3</span>
<span style="left:466px">[Arta]ApexUser</span>
<span style="left:568px">mp3</span>
<span class="rt" style="left:598px;width:84px">127,85 MB</span>
<span style="left:699px">Mp3\4DVD_01\Jethro Tull [discography]\</span>
<span style="left:1011px">14/14</span>
<span style="left:1096px">0.1</span>
<span style="left:1166px">LightningNET  -  NOI SER...</span>
<span class="rt" style="left:1286px;width:96px">134.056.96...</span>
<span style="left:1396px">&gt;=100 kI</span>
</div>
<div class="r" style="top:430px">
<div class="fi"></div>
<span style="left:41px">1 01 Fiot post.mp3</span>
<span style="left:466px">[Arta]ApexUser</span>
<span style="left:568px">mp3</span>
<span class="rt" style="left:598px;width:84px">1,75 MB</span>
<span style="left:699px">Mp3\4DVD_01\Jethro Tull [discography]\1993 Nightcap\</span>
<span style="left:1011px">14/14</span>
<span style="left:1096px">0.1</span>
<span style="left:1166px">LightningNET  -  NOI SER...</span>
<span class="rt" style="left:1286px;width:96px">1.831.765 B</span>
<span style="left:1396px">&gt;=100 kI</span>
</div>
<div class="r" style="top:447px">
<div class="fi"></div>
<span style="left:41px">Jethro Tull - Budapest.mp3</span>
<span style="left:466px">abdelbar</span>
<span style="left:568px">mp3</span>
<span class="rt" style="left:598px;width:84px">9,23 MB</span>
<span style="left:699px">audio\1969\!!!!... 420\x9999\</span>
<span style="left:1011px">0/1</span>
<span style="left:1096px">0.005</span>
<span style="left:1166px">LightningNET  -  NOI SER...</span>
<span class="rt" style="left:1286px;width:96px">9.682.520 B</span>
<span style="left:1396px">N/A</span>
</div>
<div class="r" style="top:464px">
<div class="di"></div>
<span style="left:41px">Original Masters\</span>
<span style="left:466px">bcoocks</span>
<span style="left:568px">Direct...</span>
<span style="left:699px">My Music\Alphabetical Artist &amp; Album Files\J\Jethro Tull\Origi...</span>
<span style="left:1011px">0/1</span>
<span style="left:1096px">0.01</span>
<span style="left:1166px">LightningNET  -  NOI SER...</span>
<span style="left:1396px">N/A</span>
</div>
<div class="r" style="top:481px">
<div class="fi"></div>
<span style="left:41px">02 Aqualung.mp3</span>
<span style="left:466px">bcoocks</span>
<span style="left:568px">mp3</span>
<span class="rt" style="left:598px;width:84px">6,02 MB</span>
<span style="left:699px">My Music\Alphabetical Artist &amp; Album Files\J\Jethro Tull\Origi...</span>
<span style="left:1011px">0/1</span>
<span style="left:1096px">0.01</span>
<span style="left:1166px">LightningNET  -  NOI SER...</span>
<span class="rt" style="left:1286px;width:96px">6.313.111 B</span>
<span style="left:1396px">N/A</span>
</div>
<div class="r" style="top:498px">
<div class="di"></div>
<span style="left:41px">Jethro Tull\</span>
<span style="left:466px">maurice</span>
<span style="left:568px">Direct...</span>
<span style="left:699px">Shared\Music\J\Jethro Tull\</span>
<span style="left:1011px">0/35</span>
<span style="left:1096px">50</span>
<span style="left:1166px">LightningNET  -  NOI SER...</span>
<span style="left:1396px">N/A</span>
</div>
<div class="r" style="top:515px">
<div class="fi"></div>
<span style="left:41px">Jethro Tull - 01 - Kissing Willie.mp3</span>
<span style="left:466px">maurice</span>
<span style="left:568px">mp3</span>
<span class="rt" style="left:598px;width:84px">4,89 MB</span>
<span style="left:699px">Shared\Music\J\Jethro Tull\Jethro Tull - 1989 - Rock Island\</span>
<span style="left:1011px">0/35</span>
<span style="left:1096px">50</span>
<span style="left:1166px">LightningNET  -  NOI SER...</span>
<span class="rt" style="left:1286px;width:96px">5.122.429 B</span>
<span style="left:1396px">N/A</span>
</div>
<div class="r" style="top:532px">
<div class="di"></div>
<span style="left:41px">Jethro Tull\</span>
<span style="left:466px">dark-uin</span>
<span style="left:568px">Direct...</span>
<span style="left:699px">Muzica\Jethro Tull\</span>
<span style="left:1011px">4/5</span>
<span style="left:1096px">0.005</span>
<span style="left:1166px">Atco&amp;Violet Passion - Pent...</span>
<span style="left:1396px">N/A</span>
</div>
<div class="r" style="top:549px">
<div class="fi"></div>
<span style="left:41px">Jethro Tull - 03 - Ears Of Tin.mp3</span>
<span style="left:466px">maurice</span>
<span style="left:568px">mp3</span>
<span class="rt" style="left:598px;width:84px">6,76 MB</span>
<span style="left:699px">Shared\Music\J\Jethro Tull\Jethro Tull - 1989 - Rock Island\</span>
<span style="left:1011px">0/35</span>
<span style="left:1096px">50</span>
<span style="left:1166px">LightningNET  -  NOI SER...</span>
<span class="rt" style="left:1286px;width:96px">7.092.894 B</span>
<span style="left:1396px">N/A</span>
</div>
<div class="r" style="top:566px">
<div class="fi"></div>
<span style="left:41px">Jethro Tull  -  Living In The Past.mp3</span>
<span style="left:466px">[RO][B][atfelnet]...</span>
<span style="left:568px">mp3</span>
<span class="rt" style="left:598px;width:84px">3,10 MB</span>
<span style="left:699px">mp music\Diverse Rock\</span>
<span style="left:1011px">19/20</span>
<span style="left:1096px">28.8Kbps</span>
<span style="left:1166px">*** Nirvana ***  -  Nu vom fi...</span>
<span class="rt" style="left:1286px;width:96px">3.248.222 B</span>
<span style="left:1396px">N/A</span>
</div>
<div class="r" style="top:583px">
<div class="fi"></div>
<span style="left:41px">Jethro Tull - Interview.mp3</span>
<span style="left:466px">[RO][B][atfelnet]...</span>
<span style="left:568px">mp3</span>
<span class="rt" style="left:598px;width:84px">30,23 MB</span>
<span style="left:699px">mp music\Diverse Rock\</span>
<span style="left:1011px">19/20</span>
<span style="left:1096px">28.8Kbps</span>
<span style="left:1166px">*** Nirvana ***  -  Nu vom fi...</span>
<span class="rt" style="left:1286px;width:96px">31.700.992 B</span>
<span style="left:1396px">N/A</span>
</div>
<div class="r" style="top:600px">
<div class="fi"></div>
<span style="left:41px">Jethro Tull_Songs From The Wood_The Whistler.mp3</span>
<span style="left:466px">iliana_03</span>
<span style="left:568px">mp3</span>
<span class="rt" style="left:598px;width:84px">3,23 MB</span>
<span style="left:699px">My Music\</span>
<span style="left:1011px">3/3</span>
<span style="left:1096px">Cable</span>
<span style="left:1166px">UDP ®Networks -  Power ...</span>
<span class="rt" style="left:1286px;width:96px">3.388.395 B</span>
<span style="left:1396px">&gt;=100 kI</span>
</div>
<div class="r" style="top:617px">
<div class="fi"></div>
<span style="left:41px">Jethro Tull - Cross Eyed Mary.mp3</span>
<span style="left:466px">Progress</span>
<span style="left:568px">mp3</span>
<span class="rt" style="left:598px;width:84px">5,71 MB</span>
<span style="left:699px">1 JAKO C avema\1 AUDIO\BISIT\</span>
<span style="left:1011px">68/70</span>
<span style="left:1096px">0.005</span>
<span style="left:1166px">DECIBEL HUB - Traieste cl...</span>
<span class="rt" style="left:1286px;width:96px">5.985.644 B</span>
<span style="left:1396px">N/A</span>
</div>
<div class="r" style="top:634px">
<div class="fi"></div>
<span style="left:41px">Jethro Tull - Nightcap - CD1 - 08. Solitaire.mp3</span>
<span style="left:466px">niky</span>
<span style="left:568px">mp3</span>
<span class="rt" style="left:598px;width:84px">1,95 MB</span>
<span style="left:699px">SELECT\</span>
<span style="left:1011px">0/17</span>
<span style="left:1096px">Cable</span>
<span style="left:1166px">UDP ®Networks -  Power ...</span>
<span class="rt" style="left:1286px;width:96px">2.045.959 B</span>
<span style="left:1396px">N/A</span>
</div>
<div class="r" style="top:651px">
<div class="fi"></div>
<span style="left:41px">Jethro Tull - Aqualung.mp3</span>
<span style="left:466px">Progress</span>
<span style="left:568px">mp3</span>
<span class="rt" style="left:598px;width:84px">9,10 MB</span>
<span style="left:699px">1 JAKO C avema\1 AUDIO\BISIT\</span>
<span style="left:1011px">68/70</span>
<span style="left:1096px">0.005</span>
<span style="left:1166px">DECIBEL HUB - Traieste cl...</span>
<span class="rt" style="left:1286px;width:96px">9.530.497 B</span>
<span style="left:1396px">N/A</span>
</div>
<div class="sb" style="left:1437px;top:0;width:19px;height:683px;border-left:1px solid #d8dde8"></div>
<div style="left:1439px;top:23px;width:15px;height:308px;background:linear-gradient(90deg,#c3d2ec,#e6edf8 60%,#f6f9fd);border:1px solid #a9b8d6;border-radius:2px"></div>
<div style="left:1443px;top:8px;border:4px solid transparent;border-bottom:5px solid #556;border-top:0"></div>
<div style="left:1443px;top:653px;border:4px solid transparent;border-top:5px solid #556;border-bottom:0"></div>
<div class="sb" style="left:0;top:666px;width:1456px;height:17px;border-top:1px solid #d8dde8"></div>
<div style="left:18px;top:668px;width:1170px;height:14px;background:linear-gradient(#eef1f7,#d3dae7);border:1px solid #9aa6bd;border-radius:2px"></div>
<div style="left:5px;top:671px;border:4px solid transparent;border-right:5px solid #556;border-left:0"></div>
<div style="left:1422px;top:671px;border:4px solid transparent;border-left:5px solid #556;border-right:0"></div>
</div>
<div style="left:0;top:759px;width:1680px;height:28px;background:linear-gradient(#dbe6f2,#d3dfed);border-top:1px solid #8f9bb5">
<div style="left:5px;top:8px;width:11px;height:11px;border:1px solid #667;background:#fff"></div>
<span style="left:20px;top:7px;color:#111">Searching for jethro tull...</span>
<div style="left:1463px;top:4px;width:1px;height:19px;background:#8894aa"></div>
<div style="left:1563px;top:4px;width:1px;height:19px;background:#8894aa"></div>
<div style="left:1663px;top:4px;width:1px;height:19px;background:#8894aa"></div>
<span style="left:1469px;top:7px;color:#111">74 Files</span>
</div>
<div style="left:0;top:787px;width:1680px;height:176px;background:#000060;border-top:2px solid #7d89a5">
<div style="left:0;top:0;width:1680px;height:18px;background:linear-gradient(#ffffff,#f1f3f7);color:#222">
<span style="left:13px;top:3px">User</span>
<span style="left:160px;top:3px">Hub / Segments</span>
<span style="left:262px;top:3px">Status</span>
<span class="rt" style="left:509px;top:3px;width:60px">Time left</span>
<span class="rt" style="left:585px;top:3px;width:60px">Speed</span>
<span style="left:661px;top:3px">Filename</span>
<span class="rt" style="left:861px;top:3px;width:60px">Size</span>
<span style="left:935px;top:3px">Path</span>
<span style="left:1136px;top:3px">Ip</span>
<span style="left:1185px;top:3px">Ratio</span>
<i style="left:152px;top:2px;width:1px;height:14px;background:#dfe3ea"></i>
<i style="left:254px;top:2px;width:1px;height:14px;background:#dfe3ea"></i>
<i style="left:508px;top:2px;width:1px;height:14px;background:#dfe3ea"></i>
<i style="left:578px;top:2px;width:1px;height:14px;background:#dfe3ea"></i>
<i style="left:654px;top:2px;width:1px;height:14px;background:#dfe3ea"></i>
<i style="left:850px;top:2px;width:1px;height:14px;background:#dfe3ea"></i>
<i style="left:928px;top:2px;width:1px;height:14px;background:#dfe3ea"></i>
<i style="left:1128px;top:2px;width:1px;height:14px;background:#dfe3ea"></i>
<i style="left:1178px;top:2px;width:1px;height:14px;background:#dfe3ea"></i>
<i style="left:1260px;top:2px;width:1px;height:14px;background:#dfe3ea"></i>
</div>
<div style="left:0;top:19px;width:1680px;height:17px;color:#e6e9ff">
<div class="pm" style="left:10px"></div>
<div style="left:27px;top:1px;width:15px;height:15px;border-radius:8px;background:radial-gradient(#9fe0c0,#2a7aa8)"></div>
<span style="left:45px;top:2px">9 Users</span><span style="left:158px;top:2px">0 segment(s)</span><span style="left:258px;top:2px">Connection timeout</span>
<span style="left:661px;top:2px;color:#5a64a8">All-over.jpg</span><span style="left:851px;top:2px;width:70px;text-align:right;color:#5a64a8">4,12 GB</span><span style="left:934px;top:2px;color:#5a64a8">E:\StrongDC++\Downloads\Overlord\</span>
</div></div>
<div style="left:0;top:963px;width:1680px;height:36px;background:#f4f6fa">
<div style="left:0;top:0;width:1680px;height:1px;background:#9aa6bd"></div>
<div style="left:2px;top:0;width:109px;height:18px;background:#fff;border:1px solid #8f9bb5;border-top:0"><span style="left:21px;top:2px;color:#111">Search - jethro...</span><div style="left:4px;top:5px;width:10px;height:6px;border-radius:3px;background:#9ab"></div></div>
<div style="left:5px;top:18px;width:128px;height:18px;background:linear-gradient(#f4fbf4,#d9efd9);border:1px solid #8fb08f;border-top:0"><div style="left:7px;top:3px;width:0;height:0;border:5px solid transparent;border-top:9px solid #7fa8dc;border-bottom:0"></div><span style="left:20px;right:2px;text-align:center;top:2px;font-weight:bold;color:#000;letter-spacing:0.4px;white-space:pre">Cool, ShareIG...</span></div>
<div style="left:135px;top:18px;width:142px;height:18px;background:linear-gradient(#f4fbf4,#d9efd9);border:1px solid #8fb08f;border-top:0"><div style="left:7px;top:3px;width:0;height:0;border:5px solid transparent;border-top:9px solid #7fa8dc;border-bottom:0"></div><span style="left:20px;right:2px;text-align:center;top:2px;font-weight:bold;color:#000;letter-spacing:0.4px;white-space:pre">UDP ®Networks - ...</span></div>
<div style="left:279px;top:18px;width:128px;height:18px;background:linear-gradient(#f4fbf4,#d9efd9);border:1px solid #8fb08f;border-top:0"><div style="left:7px;top:3px;width:0;height:0;border:5px solid transparent;border-top:9px solid #7fa8dc;border-bottom:0"></div><span style="left:20px;right:2px;text-align:center;top:2px;font-weight:bold;color:#000;letter-spacing:0.4px;white-space:pre">Fair Sharing (fa...</span></div>
<div style="left:410px;top:18px;width:128px;height:18px;background:linear-gradient(#f4fbf4,#d9efd9);border:1px solid #8fb08f;border-top:0"><div style="left:7px;top:3px;width:0;height:0;border:5px solid transparent;border-top:9px solid #7fa8dc;border-bottom:0"></div><span style="left:20px;right:2px;text-align:center;top:2px;font-weight:bold;color:#000;letter-spacing:0.4px;white-space:pre">Lightning-NET - ...</span></div>
<div style="left:540px;top:18px;width:131px;height:18px;background:linear-gradient(#f4fbf4,#d9efd9);border:1px solid #8fb08f;border-top:0"><div style="left:7px;top:3px;width:0;height:0;border:5px solid transparent;border-top:9px solid #7fa8dc;border-bottom:0"></div><span style="left:20px;right:2px;text-align:center;top:2px;font-weight:bold;color:#000;letter-spacing:0.4px;white-space:pre">Key-Generator@...</span></div>
<div style="left:674px;top:18px;width:124px;height:18px;background:linear-gradient(#f4fbf4,#d9efd9);border:1px solid #8fb08f;border-top:0"><div style="left:7px;top:3px;width:0;height:0;border:5px solid transparent;border-top:9px solid #7fa8dc;border-bottom:0"></div><span style="left:20px;right:2px;text-align:center;top:2px;font-weight:bold;color:#000;letter-spacing:0.4px;white-space:pre">*** Nirvana ***  ...</span></div>
<div style="left:801px;top:18px;width:130px;height:18px;background:linear-gradient(#fff,#f6dcdc);border:1px solid #c88;border-top:0"><div style="left:7px;top:3px;width:0;height:0;border:5px solid transparent;border-top:9px solid #7fa8dc;border-bottom:0"></div><span style="left:20px;right:2px;text-align:center;top:2px;font-weight:bold;color:#000;letter-spacing:0.4px;white-space:pre">sonet.no-ip.org:411</span></div>
<div style="left:933px;top:18px;width:146px;height:18px;background:linear-gradient(#f4fbf4,#d9efd9);border:1px solid #8fb08f;border-top:0"><div style="left:7px;top:3px;width:0;height:0;border:5px solid transparent;border-top:9px solid #7fa8dc;border-bottom:0"></div><span style="left:20px;right:2px;text-align:center;top:2px;font-weight:bold;color:#000;letter-spacing:0.4px;white-space:pre">DECIBEL HUB - Tr...</span></div>
<div style="left:1082px;top:18px;width:135px;height:18px;background:linear-gradient(#f4fbf4,#d9efd9);border:1px solid #8fb08f;border-top:0"><div style="left:7px;top:3px;width:0;height:0;border:5px solid transparent;border-top:9px solid #7fa8dc;border-bottom:0"></div><span style="left:20px;right:2px;text-align:center;top:2px;font-weight:bold;color:#000;letter-spacing:0.4px;white-space:pre">Fin™ @infhaone...</span></div>
<div style="left:1221px;top:18px;width:142px;height:18px;background:linear-gradient(#f4fbf4,#d9efd9);border:1px solid #8fb08f;border-top:0"><div style="left:7px;top:3px;width:0;height:0;border:5px solid transparent;border-top:9px solid #7fa8dc;border-bottom:0"></div><span style="left:20px;right:2px;text-align:center;top:2px;font-weight:bold;color:#000;letter-spacing:0.4px;white-space:pre">MegaNet The Best...</span></div>
<div style="left:1365px;top:18px;width:134px;height:18px;background:linear-gradient(#f4fbf4,#d9efd9);border:1px solid #8fb08f;border-top:0"><div style="left:7px;top:3px;width:0;height:0;border:5px solid transparent;border-top:9px solid #7fa8dc;border-bottom:0"></div><span style="left:20px;right:2px;text-align:center;top:2px;font-weight:bold;color:#000;letter-spacing:0.4px;white-space:pre">Atco&amp;Violet Pass...</span></div>
<div style="left:1502px;top:18px;width:104px;height:18px;background:linear-gradient(#f4fbf4,#d9efd9);border:1px solid #8fb08f;border-top:0"><div style="left:7px;top:3px;width:0;height:0;border:5px solid transparent;border-top:9px solid #7fa8dc;border-bottom:0"></div><span style="left:20px;right:2px;text-align:center;top:2px;font-weight:bold;color:#000;letter-spacing:0.4px;white-space:pre">˜˜˜*•.˜˜˜*•. Cķ...</span></div>
</div>
<div style="left:0;top:999px;width:1680px;height:19px;background:linear-gradient(#e2eaf4,#d6e0ee);color:#1c2c55">
<span style="left:4px;top:3px">[09:02] Searching TTH alternates for: pro-shturs.cue</span>
<div style="left:865px;top:2px;width:1px;height:15px;background:#9aa6bd"></div>
<div style="left:906px;top:2px;width:1px;height:15px;background:#9aa6bd"></div>
<div style="left:1020px;top:2px;width:1px;height:15px;background:#9aa6bd"></div>
<div style="left:1079px;top:2px;width:1px;height:15px;background:#9aa6bd"></div>
<div style="left:1186px;top:2px;width:1px;height:15px;background:#9aa6bd"></div>
<div style="left:1277px;top:2px;width:1px;height:15px;background:#9aa6bd"></div>
<div style="left:1355px;top:2px;width:1px;height:15px;background:#9aa6bd"></div>
<div style="left:1485px;top:2px;width:1px;height:15px;background:#9aa6bd"></div>
<div style="left:1600px;top:2px;width:1px;height:15px;background:#9aa6bd"></div>
<span style="left:910px;top:3px">Shared: 32,57 GB</span>
<span style="left:1025px;top:3px">H: 11/0/0</span>
<span style="left:1085px;top:3px">Slots: 20/20 (4/4)</span>
<span style="left:1193px;top:3px">D: 1,36 MB</span>
<span style="left:1284px;top:3px">U: 18,37 kB</span>
<span style="left:1359px;top:3px">D: [0][N] 3,73 kB/s</span>
<span style="left:1492px;top:3px">U: [0][N] 0 B/s</span>
</div>
<div style="left:0;top:1018px;width:1680px;height:32px;background:linear-gradient(#767c88 0,#4d525e 15%,#343843 40%,#1c1e26 52%,#15171d 100%);color:#d9dde3;font-size:12px;letter-spacing:0">
<div style="left:9px;top:-2px;width:38px;height:36px;border-radius:19px;background:radial-gradient(circle at 50% 40%,#7fb7e0 0,#2f6fb0 40%,#12305e 75%,#0a1830 100%)"></div>
<div style="left:19px;top:8px;width:8px;height:8px;background:#e8553a;border-radius:2px"></div><div style="left:29px;top:8px;width:8px;height:8px;background:#7cc043;border-radius:2px"></div><div style="left:19px;top:18px;width:8px;height:8px;background:#3f9ae0;border-radius:2px"></div><div style="left:29px;top:18px;width:8px;height:8px;background:#f5c53a;border-radius:2px"></div>
<div style="left:78px;top:9px;width:9px;height:13px;border-radius:4px;background:#3f7a56"></div>
<div style="left:99px;top:9px;width:12px;height:13px;border-radius:4px;background:#2f7fd8"></div>
<div style="left:123px;top:9px;width:15px;height:13px;border-radius:4px;background:#d8402e"></div>
<div style="left:648px;top:2px;width:156px;height:29px;border-radius:3px;background:linear-gradient(#8a8f97,#4a4e55 45%,#2a2d32 55%,#3a3d43);border:1px solid #222"></div>
<div style="left:175px;top:8px;width:16px;height:16px;border-radius:4px;background:radial-gradient(#ffb84a,#c8641a)"></div>
<span style="left:194px;top:9px">manp *** 4. Jethro ...</span>
<div style="left:333px;top:8px;width:16px;height:16px;border-radius:4px;background:linear-gradient(#fff,#6fa8e8)"></div>
<span style="left:355px;top:9px">cum se trage de pe d...</span>
<div style="left:496px;top:8px;width:16px;height:16px;border-radius:4px;background:linear-gradient(#fff,#c8d8e8)"></div>
<span style="left:515px;top:9px">untitled - Paint</span>
<div style="left:657px;top:8px;width:16px;height:16px;border-radius:4px;background:radial-gradient(#e9a84a,#6b3a12)"></div>
<span style="left:674px;top:9px">StrongDC++ 1.00 RC...</span>
<div style="left:1514px;top:8px;width:22px;height:16px;background:#3f74d8;border-radius:2px"><span style="left:3px;top:1px;font-size:11px;font-weight:bold">EN</span></div>
<span style="left:1549px;top:8px;font-size:11px">&lt;</span>
<div style="left:1568px;top:10px;width:12px;height:12px;border-radius:6px;background:#6f737c"></div>
<div style="left:1586px;top:10px;width:12px;height:12px;border-radius:6px;background:#c8402e"></div>
<div style="left:1603px;top:10px;width:12px;height:12px;border-radius:6px;background:#c4c9d2"></div>
<div style="left:1621px;top:10px;width:12px;height:12px;border-radius:6px;background:#d83a2c"></div>
<span style="left:1640px;top:9px">09:07</span>
</div>
</div></body></html>
